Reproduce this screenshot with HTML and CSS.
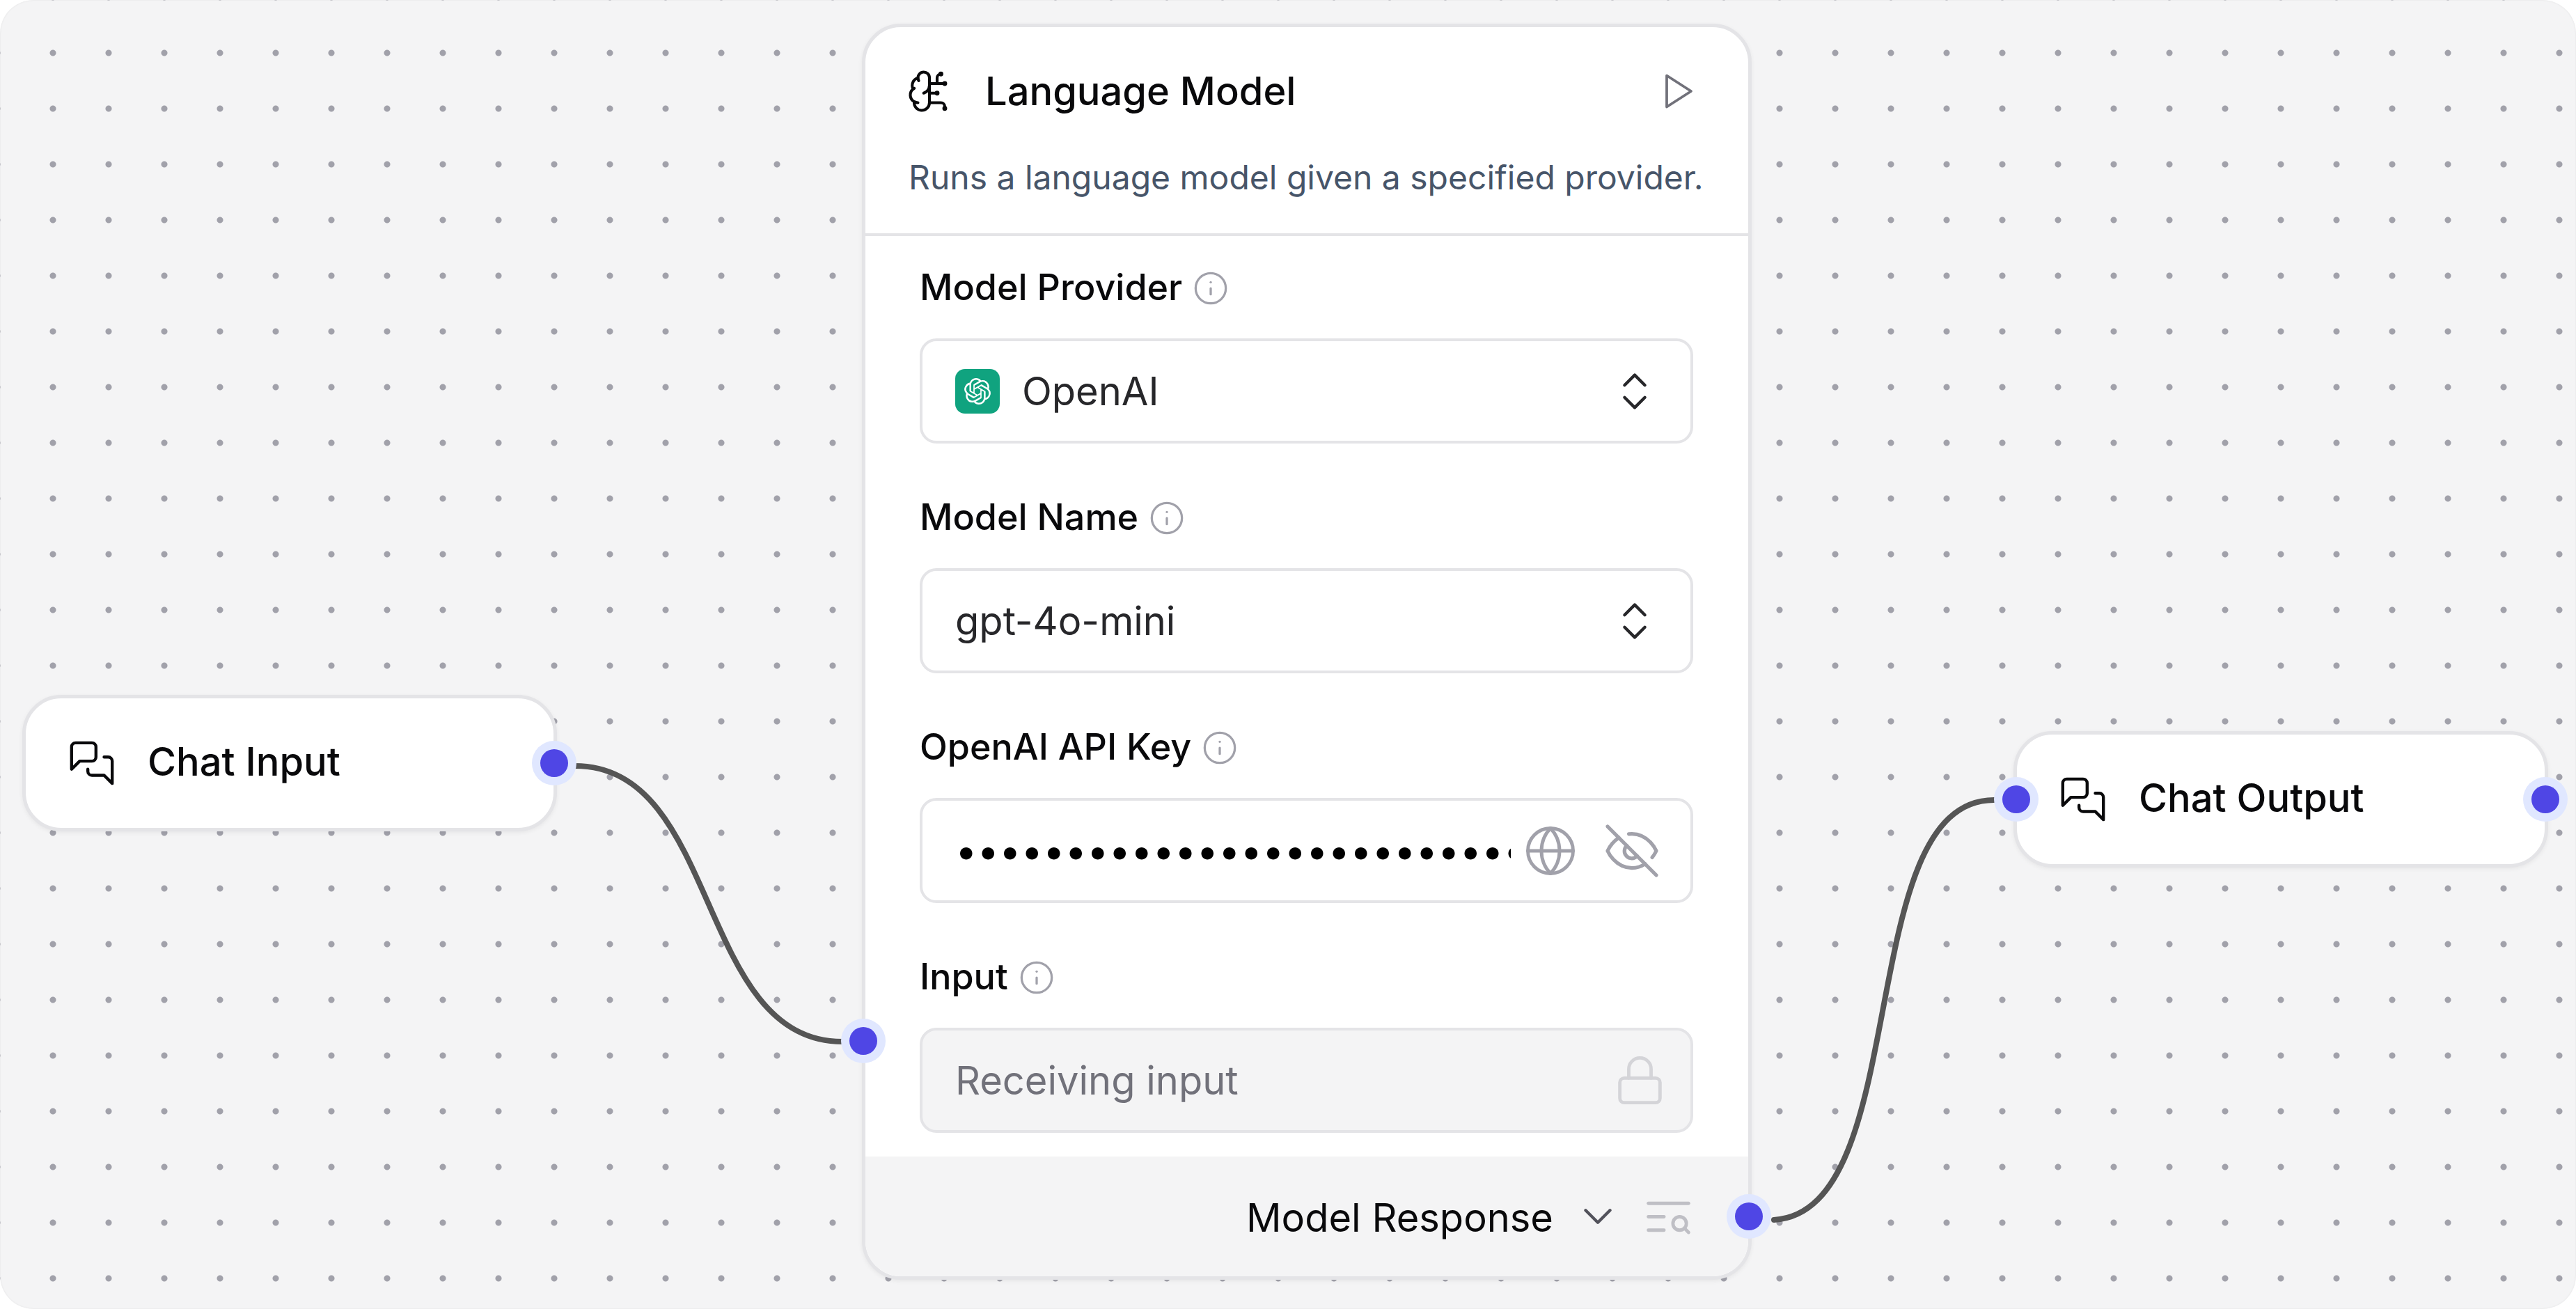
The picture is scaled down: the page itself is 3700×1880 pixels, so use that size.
FILE: index.html
```html
<!DOCTYPE html>
<html>
  <head>
    <meta charset="UTF-8">
    <title>Flow</title>
    <link rel="stylesheet" href="styles.css">
  </head>
  <body>
    <div class="canvas">

      <!-- edges -->
      <svg class="edges" viewBox="0 0 3700 1880" fill="none">
        <path d="M826 1100 C 1035 1100, 1000 1496, 1210 1496" />
        <path d="M2548 1752 C 2750 1740, 2660 1149, 2864 1149" />
      </svg>

      <!-- Chat Input -->
      <div class="node chat-input">
        <svg class="icon icon-node" viewBox="0 0 24 24"><path d="M14 9a2 2 0 0 1-2 2H6l-4 4V4c0-1.1.9-2 2-2h8a2 2 0 0 1 2 2v5Z"/><path d="M18 9h2a2 2 0 0 1 2 2v11l-4-4h-6a2 2 0 0 1-2-2v-1"/></svg>
        <span class="node-title">Chat Input</span>
        <span class="handle handle-right"></span>
      </div>

      <!-- Language Model -->
      <div class="card">
        <div class="card-head">
          <div class="card-title-row">
            <svg class="icon icon-brain" viewBox="0 0 24 24"><path d="M12 5a3 3 0 1 0-5.997.125 4 4 0 0 0-2.526 5.77 4 4 0 0 0 .556 6.588A4 4 0 1 0 12 18Z"/><path d="M9 13a4.5 4.5 0 0 0 3-4"/><path d="M6.003 5.125A3 3 0 0 0 6.401 6.5"/><path d="M3.477 10.896a4 4 0 0 1 .585-.396"/><path d="M6 18a4 4 0 0 1-1.967-.516"/><path d="M12 13h4"/><path d="M12 18h6a2 2 0 0 1 2 2v1"/><path d="M12 8h8"/><path d="M16 8V5a2 2 0 0 1 2-2"/><circle cx="16" cy="13" r=".5"/><circle cx="18" cy="3" r=".5"/><circle cx="20" cy="21" r=".5"/><circle cx="20" cy="8" r=".5"/></svg>
            <span class="card-title">Language Model</span>
            <svg class="icon icon-play" viewBox="0 0 24 24"><polygon points="6 3 20 12 6 21 6 3"/></svg>
          </div>
          <p class="card-desc">Runs a language model given a specified provider.</p>
        </div>

        <div class="fields">
          <div class="field">
            <div class="field-label">Model Provider
              <svg class="icon icon-info" viewBox="0 0 24 24"><circle cx="12" cy="12" r="10"/><path d="M12 16v-4"/><path d="M12 8h.01"/></svg>
            </div>
            <div class="box box-select">
              <span class="provider-logo">
                <svg viewBox="0 0 24 24"><path d="M22.2819 9.8211a5.9847 5.9847 0 0 0-.5157-4.9108 6.0462 6.0462 0 0 0-6.5098-2.9A6.0651 6.0651 0 0 0 4.9807 4.1818a5.9847 5.9847 0 0 0-3.9977 2.9 6.0462 6.0462 0 0 0 .7427 7.0966 5.98 5.98 0 0 0 .511 4.9107 6.051 6.051 0 0 0 6.5146 2.9001A5.9847 5.9847 0 0 0 13.2599 24a6.0557 6.0557 0 0 0 5.7718-4.2058 5.9894 5.9894 0 0 0 3.9977-2.9001 6.0557 6.0557 0 0 0-.7475-7.0729zm-9.022 12.6081a4.4755 4.4755 0 0 1-2.8764-1.0408l.1419-.0804 4.7783-2.7582a.7948.7948 0 0 0 .3927-.6813v-6.7369l2.02 1.1686a.071.071 0 0 1 .038.052v5.5826a4.504 4.504 0 0 1-4.4945 4.4944zm-9.6607-4.1254a4.4708 4.4708 0 0 1-.5346-3.0137l.142.0852 4.783 2.7582a.7712.7712 0 0 0 .7806 0l5.8428-3.3685v2.3324a.0804.0804 0 0 1-.0332.0615L9.74 19.9502a4.4992 4.4992 0 0 1-6.1408-1.6464zM2.3408 7.8956a4.485 4.485 0 0 1 2.3655-1.9728V11.6a.7664.7664 0 0 0 .3879.6765l5.8144 3.3543-2.0201 1.1685a.0757.0757 0 0 1-.071 0l-4.8303-2.7865A4.504 4.504 0 0 1 2.3408 7.872zm16.5963 3.8558L13.1038 8.364 15.1192 7.2a.0757.0757 0 0 1 .071 0l4.8303 2.7913a4.4944 4.4944 0 0 1-.6765 8.1042v-5.6772a.79.79 0 0 0-.407-.667zm2.0107-3.0231l-.142-.0852-4.7735-2.7818a.7759.7759 0 0 0-.7854 0L9.409 9.2297V6.8974a.0662.0662 0 0 1 .0284-.0615l4.8303-2.7866a4.4992 4.4992 0 0 1 6.6802 4.66zM8.3065 12.863l-2.02-1.1638a.0804.0804 0 0 1-.038-.0567V6.0742a4.4992 4.4992 0 0 1 7.3757-3.4537l-.142.0805L8.704 5.459a.7948.7948 0 0 0-.3927.6813zm1.0976-2.3654l2.602-1.4998 2.6069 1.4998v2.9994l-2.5974 1.5093-2.6067-1.4997Z"/></svg>
              </span>
              <span class="box-text">OpenAI</span>
              <svg class="icon icon-updown" viewBox="0 0 24 24"><path d="m7 15 5 5 5-5"/><path d="m7 9 5-5 5 5"/></svg>
            </div>
          </div>

          <div class="field">
            <div class="field-label">Model Name
              <svg class="icon icon-info" viewBox="0 0 24 24"><circle cx="12" cy="12" r="10"/><path d="M12 16v-4"/><path d="M12 8h.01"/></svg>
            </div>
            <div class="box box-select">
              <span class="box-text">gpt-4o-mini</span>
              <svg class="icon icon-updown" viewBox="0 0 24 24"><path d="m7 15 5 5 5-5"/><path d="m7 9 5-5 5 5"/></svg>
            </div>
          </div>

          <div class="field">
            <div class="field-label">OpenAI API Key
              <svg class="icon icon-info" viewBox="0 0 24 24"><circle cx="12" cy="12" r="10"/><path d="M12 16v-4"/><path d="M12 8h.01"/></svg>
            </div>
            <div class="box box-password">
              <input class="password" type="password" value="sk-proj-0000000000000000000000000000000000000" readonly />
              <svg class="icon icon-globe" viewBox="0 0 24 24"><circle cx="12" cy="12" r="10"/><path d="M12 2a14.5 14.5 0 0 0 0 20 14.5 14.5 0 0 0 0-20"/><path d="M2 12h20"/></svg>
              <svg class="icon icon-eye" viewBox="0 0 24 24"><path d="M9.88 9.88a3 3 0 1 0 4.24 4.24"/><path d="M10.73 5.08A10.43 10.43 0 0 1 12 5c7 0 10 7 10 7a13.16 13.16 0 0 1-1.67 2.68"/><path d="M6.61 6.61A13.526 13.526 0 0 0 2 12s3 7 10 7a9.74 9.74 0 0 0 5.39-1.61"/><line x1="2" x2="22" y1="2" y2="22"/></svg>
            </div>
          </div>

          <div class="field">
            <div class="field-label">Input
              <svg class="icon icon-info" viewBox="0 0 24 24"><circle cx="12" cy="12" r="10"/><path d="M12 16v-4"/><path d="M12 8h.01"/></svg>
            </div>
            <div class="box box-disabled">
              <span class="box-text">Receiving input</span>
              <svg class="icon icon-lock" viewBox="0 0 24 24"><rect x="3" y="11" width="18" height="11" rx="2" ry="2"/><path d="M7 11V7a5 5 0 0 1 10 0v4"/></svg>
            </div>
          </div>
        </div>

        <div class="card-foot">
          <span class="foot-text">Model Response</span>
          <svg class="icon icon-chevron" viewBox="0 0 24 24"><path d="m6 9 6 6 6-6"/></svg>
          <svg class="icon icon-search" viewBox="0 0 24 24"><path d="M21 6H3"/><path d="M10 12H3"/><path d="M10 18H3"/><circle cx="17" cy="15" r="3"/><path d="m21 19-1.9-1.9"/></svg>
          <span class="handle handle-right"></span>
        </div>

        <span class="handle handle-input"></span>
      </div>

      <!-- Chat Output -->
      <div class="node chat-output">
        <svg class="icon icon-node" viewBox="0 0 24 24"><path d="M14 9a2 2 0 0 1-2 2H6l-4 4V4c0-1.1.9-2 2-2h8a2 2 0 0 1 2 2v5Z"/><path d="M18 9h2a2 2 0 0 1 2 2v11l-4-4h-6a2 2 0 0 1-2-2v-1"/></svg>
        <span class="node-title">Chat Output</span>
        <span class="handle handle-left"></span>
        <span class="handle handle-right"></span>
      </div>

    </div>
  </body>
</html>
```

FILE: styles.css
```css
* {
  box-sizing: border-box;
}
body {
  margin: 0;
  background-color: #fff;
  font-family: Inter, "Noto Sans", sans-serif;
  color: #09090b;
  overflow: hidden;
}
.canvas {
  position: relative;
  width: 3700px;
  height: 1880px;
  border-radius: 48px;
  background-color: #f4f4f5;
  background-image: radial-gradient(circle, #a1a1aa 4px, transparent 5px);
  background-size: 80px 80px;
  background-position: 36px 36px;
  box-shadow: inset 0 0 3px rgba(0, 0, 0, 0.08);
  overflow: hidden;
}
.edges {
  position: absolute;
  left: 0;
  top: 0;
  width: 3700px;
  height: 1880px;
}
.edges path {
  stroke: #555;
  stroke-width: 8;
  stroke-linecap: round;
}
.icon {
  display: block;
  flex: none;
  fill: none;
  stroke: currentColor;
  stroke-width: 1.5;
  stroke-linecap: round;
  stroke-linejoin: round;
}

/* small nodes */
.node {
  position: absolute;
  display: flex;
  align-items: center;
  gap: 45px;
  width: 768px;
  height: 196px;
  padding-left: 60px;
  background-color: #fff;
  border: 5px solid #e4e4e7;
  border-radius: 56px;
  box-shadow: 0 2px 6px rgba(0, 0, 0, 0.06);
}
.chat-input {
  left: 32px;
  top: 998px;
}
.chat-output {
  left: 2892px;
  top: 1050px;
}
.icon-node {
  width: 70px;
  height: 70px;
}
.node-title {
  margin-bottom: 4px;
  font-size: 56px;
  font-weight: 500;
}

/* handles */
.handle {
  position: absolute;
  width: 40px;
  height: 40px;
  border-radius: 50%;
  background-color: #4f46e5;
  box-shadow: 0 0 0 12px #e0e7ff;
}
.node .handle {
  top: 50%;
  margin-top: -20px;
}
.node .handle-right {
  right: -21px;
}
.node .handle-left {
  left: -21px;
}
.handle-input {
  left: -23px;
  top: 1436px;
}
.card-foot .handle-right {
  right: -21px;
  top: 50%;
  margin-top: -20px;
}

/* language model card */
.card {
  position: absolute;
  left: 1238px;
  top: 34px;
  width: 1278px;
  height: 1804px;
  display: flex;
  flex-direction: column;
  background-color: #fff;
  border: 5px solid #e4e4e7;
  border-radius: 56px;
  box-shadow: 0 2px 6px rgba(0, 0, 0, 0.06);
}
.card-head {
  height: 300px;
  padding: 0 62px;
  border-bottom: 4px solid #e4e4e7;
}
.card-title-row {
  display: flex;
  align-items: center;
  height: 184px;
  margin-left: -3px;
}
.icon-brain {
  width: 66px;
  height: 66px;
  margin-right: 47px;
}
.card-title {
  flex: 1;
  font-size: 56px;
  font-weight: 500;
}
.icon-play {
  width: 60px;
  height: 60px;
  margin-right: 10px;
  color: #71717a;
}
.card-desc {
  margin: 0;
  font-size: 48px;
  line-height: 64px;
  color: #475569;
  white-space: nowrap;
}
.fields {
  display: flex;
  flex-direction: column;
  gap: 77px;
  padding: 45px 79px 34px 78px;
}
.field-label {
  display: flex;
  align-items: center;
  gap: 15px;
  height: 60px;
  padding-bottom: 3px;
  margin-bottom: 42px;
  font-size: 52px;
  font-weight: 500;
}
.icon-info {
  width: 52px;
  height: 52px;
  margin-top: 3px;
  color: #a1a1aa;
}
.box {
  display: flex;
  align-items: center;
  height: 151px;
  padding: 0 34px 0 47px;
  background-color: #fff;
  border: 4px solid #e4e4e7;
  border-radius: 24px;
}
.box-text {
  flex: 1;
  font-size: 56px;
  color: #27272a;
}
.provider-logo {
  display: flex;
  align-items: center;
  justify-content: center;
  width: 64px;
  height: 64px;
  margin-right: 32px;
  background-color: #10a37f;
  border-radius: 14px;
}
.provider-logo svg {
  width: 38px;
  height: 38px;
  fill: #fff;
}
.icon-updown {
  width: 70px;
  height: 70px;
  margin-right: 11px;
  color: #27272a;
}
.password {
  flex: 1;
  min-width: 0;
  padding: 0;
  border: none;
  outline: none;
  background: none;
  font-family: Inter, sans-serif;
  font-size: 56px;
  letter-spacing: 0;
  color: #000;
}
.icon-globe {
  width: 78px;
  height: 78px;
  margin-left: 18px;
  color: #a1a1aa;
}
.icon-eye {
  width: 84px;
  height: 84px;
  margin-left: 36px;
  margin-right: 8px;
  color: #a1a1aa;
}
.box-disabled {
  background-color: #f4f4f5;
}
.box-disabled .box-text {
  color: #71717a;
}
.icon-lock {
  width: 77px;
  height: 77px;
  color: #d4d4d8;
}
.card-foot {
  position: relative;
  flex: 1;
  display: flex;
  align-items: center;
  justify-content: flex-end;
  padding-right: 76px;
  background-color: #f4f4f5;
  border-radius: 0 0 51px 51px;
}
.foot-text {
  margin-top: 3px;
  font-size: 56px;
}
.icon-chevron {
  width: 70px;
  height: 70px;
  margin-left: 29px;
  color: #52525b;
}
.icon-search {
  width: 77px;
  height: 77px;
  margin-left: 28px;
  color: #bfbfc5;
}
```
